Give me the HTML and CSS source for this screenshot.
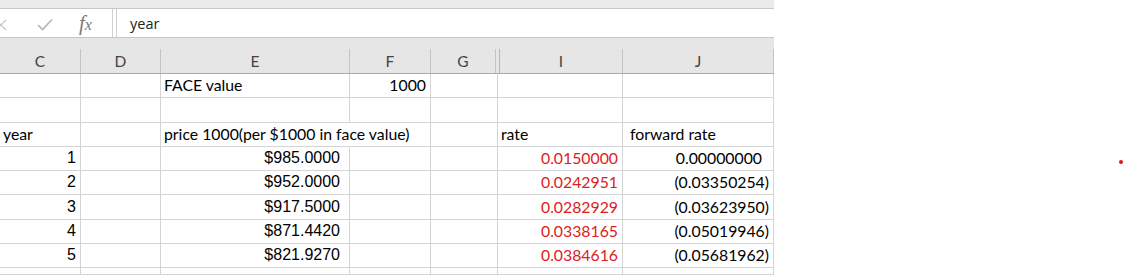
FILE: index.html
```html
<!DOCTYPE html>
<html lang="en">
<head>
  <meta charset="UTF-8">
  <title>Forward rates</title>
  <link rel="stylesheet" href="styles.css">
</head>
<body>
  <div class="excel">
    <div class="ribbon-edge"></div>

    <div class="formula-bar">
      <div class="fx-buttons">
        <svg class="btn-cancel" width="10" height="12" viewBox="0 0 10 12">
          <path d="M-4 1 L6 11 M6 1 L-4 11" stroke="#c4c4c4" stroke-width="1.2" fill="none"/>
        </svg>
        <svg class="btn-enter" width="16" height="13" viewBox="0 0 16 13">
          <path d="M1 7 L5.5 11.5 L15 1.5" stroke="#b4b4b4" stroke-width="1.6" fill="none"/>
        </svg>
        <span class="fx"><i>f</i><i class="x">x</i></span>
      </div>
      <div class="formula-input">year</div>
    </div>

    <div class="col-band">
      <div class="col-heads">
        <div class="head">C</div>
        <div class="head">D</div>
        <div class="head">E</div>
        <div class="head">F</div>
        <div class="head">G</div>
        <div class="head hidden-col"></div>
        <div class="head">I</div>
        <div class="head">J</div>
      </div>
    </div>

    <div class="sheet">
      <!-- row: face value -->
      <div class="row">
        <div class="cell"></div>
        <div class="cell"></div>
        <div class="cell">FACE value</div>
        <div class="cell num">1000</div>
        <div class="cell"></div>
        <div class="cell"></div>
        <div class="cell"></div>
      </div>
      <div class="row">
        <div class="cell"></div>
        <div class="cell"></div>
        <div class="cell"></div>
        <div class="cell"></div>
        <div class="cell"></div>
        <div class="cell"></div>
        <div class="cell"></div>
      </div>
      <!-- labels -->
      <div class="row">
        <div class="cell">year</div>
        <div class="cell"></div>
        <div class="cell spill">price 1000(per $1000 in face value)</div>
        <div class="cell"></div>
        <div class="cell"></div>
        <div class="cell">rate</div>
        <div class="cell indent">forward rate</div>
      </div>
      <!-- data -->
      <div class="row">
        <div class="cell num arial">1</div>
        <div class="cell"></div>
        <div class="cell num arial money">$985.0000</div>
        <div class="cell"></div>
        <div class="cell"></div>
        <div class="cell num red">0.0150000</div>
        <div class="cell num paren">0.00000000</div>
      </div>
      <div class="row">
        <div class="cell num arial">2</div>
        <div class="cell"></div>
        <div class="cell num arial money">$952.0000</div>
        <div class="cell"></div>
        <div class="cell"></div>
        <div class="cell num red">0.0242951</div>
        <div class="cell num">(0.03350254)</div>
      </div>
      <div class="row">
        <div class="cell num arial">3</div>
        <div class="cell"></div>
        <div class="cell num arial money">$917.5000</div>
        <div class="cell"></div>
        <div class="cell"></div>
        <div class="cell num red">0.0282929</div>
        <div class="cell num">(0.03623950)</div>
      </div>
      <div class="row">
        <div class="cell num arial">4</div>
        <div class="cell"></div>
        <div class="cell num arial money">$871.4420</div>
        <div class="cell"></div>
        <div class="cell"></div>
        <div class="cell num red">0.0338165</div>
        <div class="cell num">(0.05019946)</div>
      </div>
      <div class="row">
        <div class="cell num arial">5</div>
        <div class="cell"></div>
        <div class="cell num arial money">$821.9270</div>
        <div class="cell"></div>
        <div class="cell"></div>
        <div class="cell num red">0.0384616</div>
        <div class="cell num">(0.05681962)</div>
      </div>
      <div class="row last">
        <div class="cell"></div>
        <div class="cell"></div>
        <div class="cell"></div>
        <div class="cell"></div>
        <div class="cell"></div>
        <div class="cell"></div>
        <div class="cell"></div>
      </div>
    </div>
  </div>

  <span class="dot"></span>
</body>
</html>
```

FILE: styles.css
```css
html {
  overflow: hidden;
}
body {
  margin: 0;
  padding: 0;
  width: 1124px;
  height: 275px;
  overflow: hidden;
  position: relative;
  background: #ffffff;
  font-family: Lato, "Open Sans", sans-serif;
  color: #000000;
}
.excel {
  width: 774px;
}
.ribbon-edge {
  height: 8px;
  background: #ebebeb;
  border-bottom: 1px solid #c8c8c8;
}
.formula-bar {
  display: flex;
  height: 28px;
  background: #ffffff;
  border-bottom: 1px solid #c6c6c6;
}
.fx-buttons {
  width: 112px;
  border-right: 1px solid #d0d0d0;
  display: flex;
  align-items: center;
}
.btn-cancel {
  margin-top: 4px;
}
.btn-enter {
  margin-left: 27px;
  margin-top: 2px;
}
.fx {
  margin-left: 26px;
  font-family: "Liberation Serif", serif;
  font-size: 21px;
  color: #7a7a7a;
}
.fx .x {
  font-size: 16px;
}
.formula-input {
  margin-left: 3px;
  flex: 1;
  border-left: 1px solid #d0d0d0;
  padding-left: 13px;
  font-family: "Open Sans", sans-serif;
  font-size: 14.5px;
  color: #222222;
  display: flex;
  align-items: center;
}
.col-band {
  background: #e6e6e6;
  padding-top: 11px;
  border-bottom: 1px solid #ababab;
}
.col-heads {
  display: grid;
  grid-template-columns: 81px 80px 189px 81px 65px 4px 123px 151px;
  height: 24px;
}
.head {
  border-right: 1px solid #c4c4c4;
  display: flex;
  justify-content: center;
  align-items: center;
  font-size: 15.5px;
  color: #444444;
  box-sizing: border-box;
}
.hidden-col {
  border-right: 1px solid #b8b8b8;
}
.sheet {
  display: flex;
  flex-direction: column;
}
.row {
  display: grid;
  grid-template-columns: 81px 80px 189px 81px 67px 125px 151px;
  height: 24px;
}
.row:nth-child(2),
.row:nth-child(6) {
  height: 25px;
}
.row.last {
  height: 7px;
}
.cell {
  box-sizing: border-box;
  border-right: 1px solid #d4d4d4;
  border-bottom: 1px solid #d4d4d4;
  display: flex;
  align-items: flex-end;
  padding: 0 4px 2px 3px;
  font-size: 15.8px;
  line-height: 20px;
  white-space: nowrap;
}
.spill {
  border-right-color: transparent;
}
.num {
  justify-content: flex-end;
}
.arial {
  font-family: "Liberation Sans", Arial, sans-serif;
  font-size: 16px;
}
.money {
  padding-right: 9px;
}
.red {
  color: #dc2020;
}
.paren {
  padding-right: 11px;
}
.indent {
  padding-left: 7px;
}
.last .cell {
  padding: 0;
}
.dot {
  position: absolute;
  left: 1119px;
  top: 160px;
  width: 4px;
  height: 4px;
  border-radius: 50%;
  background: #e0141c;
}
```
